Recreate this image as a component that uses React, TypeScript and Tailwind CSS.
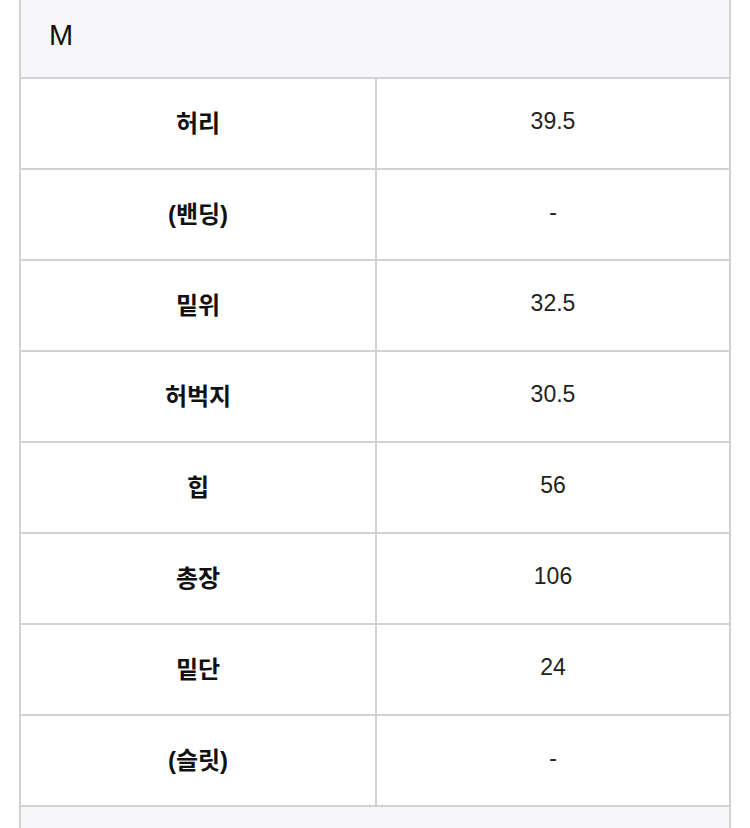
import React from 'react';

const rows: [string, string][] = [
  ['허리', '39.5'],
  ['(밴딩)', '-'],
  ['밑위', '32.5'],
  ['허벅지', '30.5'],
  ['힙', '56'],
  ['총장', '106'],
  ['밑단', '24'],
  ['(슬릿)', '-'],
];

const App = () => {
  return (
    <div className="w-[750px] h-[828px] overflow-hidden bg-white font-['Liberation_Sans','Noto_Sans_CJK_KR',sans-serif]">
      <div className="mx-[19px] border-x-2 border-[#d2d2d4]">
        {/* Size header */}
        <div className="h-[79px] bg-[#f7f7f9] border-b-2 border-[#d2d2d4] pl-[28px] pt-[14px]">
          <span className="text-[29px] text-[#111]">M</span>
        </div>

        {rows.map(([label, value]) => (
          <div key={label} className="flex h-[91px] border-b-2 border-[#d2d2d4]">
            <div className="w-[356px] border-r-2 border-[#d2d2d4] flex items-center justify-center">
              <span className="text-[24px] font-bold text-[#111]">{label}</span>
            </div>
            <div className="flex-1 flex items-center justify-center pb-[4px]">
              <span className="text-[23px] text-[#222]">{value}</span>
            </div>
          </div>
        ))}

        <div className="h-[40px] bg-[#f7f7f9]" />
      </div>
    </div>
  );
};

export default App;
